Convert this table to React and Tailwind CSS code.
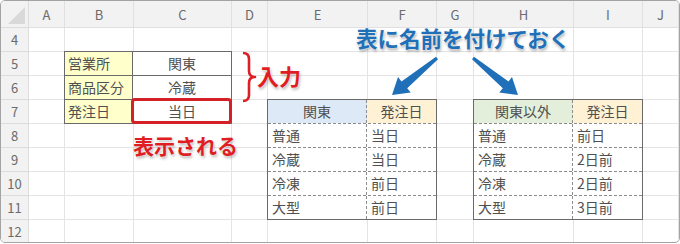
import React from 'react'

const font = "font-['Noto_Sans_CJK_JP','Noto_Sans',sans-serif]"
const cols = ['A', 'B', 'C', 'D', 'E', 'F', 'G', 'H', 'I', 'J']
const rows = [4, 5, 6, 7, 8, 9, 10, 11, 12]

const inputRows = [
  ['営業所', '関東'],
  ['商品区分', '冷蔵'],
  ['発注日', '当日'],
]

const kanto = [['普通', '当日'], ['冷蔵', '当日'], ['冷凍', '前日'], ['大型', '前日']]
const other = [['普通', '前日'], ['冷蔵', '2日前'], ['冷凍', '2日前'], ['大型', '3日前']]

// tapered arrow polygon from (x1,y1) to tip (x2,y2)
function arrowPts(x1, y1, x2, y2, tail = 1.5, shaft = 4.5, head = 10, headLen = 16) {
  const dx = x2 - x1, dy = y2 - y1
  const len = Math.hypot(dx, dy)
  const ux = dx / len, uy = dy / len
  const nx = -uy, ny = ux
  const bx = x2 - ux * headLen, by = y2 - uy * headLen
  const p = [
    [x1 + nx * tail, y1 + ny * tail],
    [bx + nx * shaft, by + ny * shaft],
    [bx + nx * head, by + ny * head],
    [x2, y2],
    [bx - nx * head, by - ny * head],
    [bx - nx * shaft, by - ny * shaft],
    [x1 - nx * tail, y1 - ny * tail],
  ]
  return p.map(([x, y]) => `${x.toFixed(1)},${y.toFixed(1)}`).join(' ')
}

function LookupTable({ head, headBg, data, place }) {
  return (
    <div className={`${place} -ml-px -mt-px border border-[#6a6a6a] flex flex-col bg-white text-[14px] text-[#505050]`}>
      <div className="flex h-[23px]">
        <div className={`w-[99px] border-r border-dashed border-[#8c8c8c] flex items-center justify-center ${headBg}`}>{head}</div>
        <div className="flex-1 flex items-center justify-center bg-[#fff1d4]">発注日</div>
      </div>
      {data.map(([a, b]) => (
        <div key={a} className="flex h-[24px] border-t border-dashed border-[#8c8c8c]">
          <div className="w-[99px] border-r border-dashed border-[#8c8c8c] flex items-center pl-[4px]">{a}</div>
          <div className="flex-1 flex items-center pl-[4px]">{b}</div>
        </div>
      ))}
    </div>
  )
}

export default function App() {
  return (
    <div className={`w-[680px] h-[244px] bg-white ${font}`}>
      <div className="relative h-[243px] border border-[#a3a3a3] rounded-[5px] overflow-hidden">
        <div className="grid">
          {/* base sheet */}
          <div className="col-start-1 row-start-1 grid grid-cols-[28px_36px_69px_98px_36px_100px_69px_37px_100px_69px_36px] grid-rows-[27px_repeat(9,24px)]">
            <div className="bg-[#f2f2f2] border-r border-b border-[#dcdcdc] flex items-end justify-end p-[3px]">
              <svg width="17" height="17" viewBox="0 0 17 17"><polygon points="17,0 17,17 0,17" fill="#d9d9d9" /></svg>
            </div>
            {cols.map(c => (
              <div key={c} className="bg-[#f2f2f2] border-r border-b border-[#e0e0e0] flex items-center justify-center text-[13px] leading-none text-[#6b6b6b]">{c}</div>
            ))}
            {rows.map(r => (
              <React.Fragment key={r}>
                <div className="bg-[#f2f2f2] border-r border-b border-[#dcdcdc] flex items-center justify-center text-[13px] leading-none text-[#6b6b6b]">{r}</div>
                {cols.map(c => (
                  <div key={c} className="border-r border-b border-[#e4e4e4]" />
                ))}
              </React.Fragment>
            ))}
          </div>

          {/* tables on the sheet */}
          <div className="col-start-1 row-start-1 grid grid-cols-[28px_36px_69px_98px_36px_100px_69px_37px_100px_69px_36px] grid-rows-[27px_repeat(9,24px)]">
            <div className="col-start-3 col-span-2 row-start-3 row-span-3 -ml-px -mt-px border border-[#6a6a6a] flex flex-col text-[14px] text-[#505050]">
              {inputRows.map(([label, value], i) => (
                <div key={label} className={i === 0 ? 'flex h-[23px]' : 'flex h-[24px] border-t border-[#6a6a6a]'}>
                  <div className="w-[68px] bg-[#ffffcc] border-r border-[#6a6a6a] flex items-center pl-[3px]">{label}</div>
                  <div className="relative flex-1 bg-white flex items-center justify-center">
                    {value}
                    {i === 2 && (
                      <span className="absolute -left-[2px] -right-[1px] -top-[2px] -bottom-[1px] border-[3px] border-[#d42128] rounded-[4px]" />
                    )}
                  </div>
                </div>
              ))}
            </div>

            <LookupTable head="関東" headBg="bg-[#dde9f6]" data={kanto} place="col-start-6 col-span-2 row-start-5 row-span-5" />
            <LookupTable head="関東以外" headBg="bg-[#e3efdb]" data={other} place="col-start-9 col-span-2 row-start-5 row-span-5" />
          </div>
        </div>

        {/* annotations */}
        <svg className="absolute -left-px -top-px pointer-events-none" width="680" height="244" viewBox="0 0 680 244">
          <path d="M243 53 Q249 53 249 59 L249 71 Q249 77 255 77 Q249 77 249 83 L249 95 Q249 101 243 101"
            fill="none" stroke="#df1f26" strokeWidth="2.6" strokeLinejoin="round" />
          <g fill="#1f70b8">
            <polygon points={arrowPts(437, 58, 392, 95)} />
            <polygon points={arrowPts(473, 58, 518, 95)} />
          </g>
        </svg>

        <div className="absolute left-[256px] top-[63px] text-[22px] leading-none font-bold text-[#e11d24] [text-shadow:0_0_2px_#fff,1px_2px_3px_rgba(0,0,0,0.3)]">入力</div>
        <div className="absolute left-[132px] top-[134px] text-[21px] leading-none font-bold text-[#e11d24] [text-shadow:0_0_2px_#fff,1px_2px_3px_rgba(0,0,0,0.3)]">表示される</div>
        <div className="absolute left-[355px] top-[26px] text-[21.5px] leading-none font-bold text-[#1f70b8] [text-shadow:0_0_2px_#fff,1px_2px_3px_rgba(0,0,0,0.35)]">表に名前を付けておく</div>
      </div>
    </div>
  )
}
